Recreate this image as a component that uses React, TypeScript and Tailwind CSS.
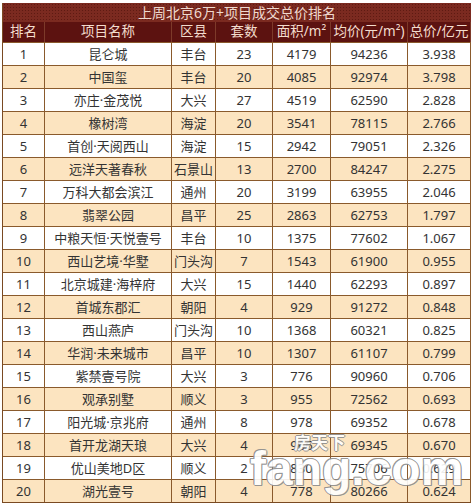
import React from "react";

const rows = [
  ["1", "昆仑城", "丰台", "23", "4179", "94236", "3.938"],
  ["2", "中国玺", "丰台", "20", "4085", "92974", "3.798"],
  ["3", "亦庄·金茂悦", "大兴", "27", "4519", "62590", "2.828"],
  ["4", "橡树湾", "海淀", "20", "3541", "78115", "2.766"],
  ["5", "首创·天阅西山", "海淀", "15", "2942", "79051", "2.326"],
  ["6", "远洋天著春秋", "石景山", "13", "2700", "84247", "2.275"],
  ["7", "万科大都会滨江", "通州", "20", "3199", "63955", "2.046"],
  ["8", "翡翠公园", "昌平", "25", "2863", "62753", "1.797"],
  ["9", "中粮天恒·天悦壹号", "丰台", "10", "1375", "77602", "1.067"],
  ["10", "西山艺境·华墅", "门头沟", "7", "1543", "61900", "0.955"],
  ["11", "北京城建·海梓府", "大兴", "15", "1440", "62293", "0.897"],
  ["12", "首城东郡汇", "朝阳", "4", "929", "91272", "0.848"],
  ["13", "西山燕庐", "门头沟", "10", "1368", "60321", "0.825"],
  ["14", "华润·未来城市", "昌平", "10", "1307", "61107", "0.799"],
  ["15", "紫禁壹号院", "大兴", "3", "776", "90960", "0.706"],
  ["16", "观承别墅", "顺义", "3", "955", "72562", "0.693"],
  ["17", "阳光城·京兆府", "通州", "8", "978", "69352", "0.678"],
  ["18", "首开龙湖天琅", "大兴", "4", "966", "69345", "0.670"],
  ["19", "优山美地D区", "顺义", "2", "830", "75706", "0.629"],
  ["20", "湖光壹号", "朝阳", "4", "778", "80266", "0.624"],
];

const headers = ["排名", "项目名称", "区县", "套数", "面积/m²", "均价(元/m²)", "总价/亿元"];

const cols = "grid grid-cols-[42px_127px_44px_57px_58px_77px_63px]";

export default function App() {
  return (
    <div className="relative w-[475px] h-[504px] bg-white pt-[3px] pl-[2px] font-['Noto_Sans','Noto_Sans_CJK_SC',sans-serif] overflow-hidden">
      <div className="w-[469px] border-l border-b border-[#7a4a22]">
        {/* title bar */}
        <div className="h-[19px] flex items-center justify-center bg-[#7b2a20] bg-[radial-gradient(#5e1a12_0.8px,transparent_0.9px)] bg-[size:3px_3px] text-[#efd9cf] text-[14px] leading-none">
          上周北京6万+项目成交总价排名
        </div>

        {/* header row */}
        <div className={`${cols} h-[20px] bg-[#5c1210]`}>
          {headers.map((h, i) => (
            <div
              key={i}
              className="flex items-center justify-center border-r border-[#7d3a2a] text-[#f3dccd] text-[13.5px] leading-none"
            >
              {h}
            </div>
          ))}
        </div>

        {/* body */}
        {rows.map((r, i) => (
          <div
            key={i}
            className={`${cols} h-[23px] border-t border-[#8a5a2c] ${i % 2 === 0 ? "bg-white" : "bg-[#fce4c0]"}`}
          >
            {r.map((c, j) => (
              <div
                key={j}
                className="flex items-center justify-center border-r border-[#8a5a2c] text-[#333333] text-[13px] leading-none"
              >
                {c}
              </div>
            ))}
          </div>
        ))}
      </div>

      {/* watermark */}
      <div className="absolute left-[250px] top-[434px] w-[225px] whitespace-nowrap pointer-events-none select-none opacity-90">
        <div className="ml-[44px] text-[17px] leading-none font-bold text-white [text-shadow:1px_0_#8c8c8c,-1px_0_#8c8c8c,0_1px_#8c8c8c,0_-1px_#8c8c8c]">
          房天下
        </div>
        <div className="-mt-[6px] text-[48px] leading-none font-bold text-white font-['Liberation_Sans',sans-serif] [text-shadow:1px_0_#8c8c8c,-1px_0_#8c8c8c,0_1px_#8c8c8c,0_-1px_#8c8c8c,1px_1px_#8c8c8c,-1px_-1px_#8c8c8c]">
          fang.com
        </div>
      </div>
    </div>
  );
}
